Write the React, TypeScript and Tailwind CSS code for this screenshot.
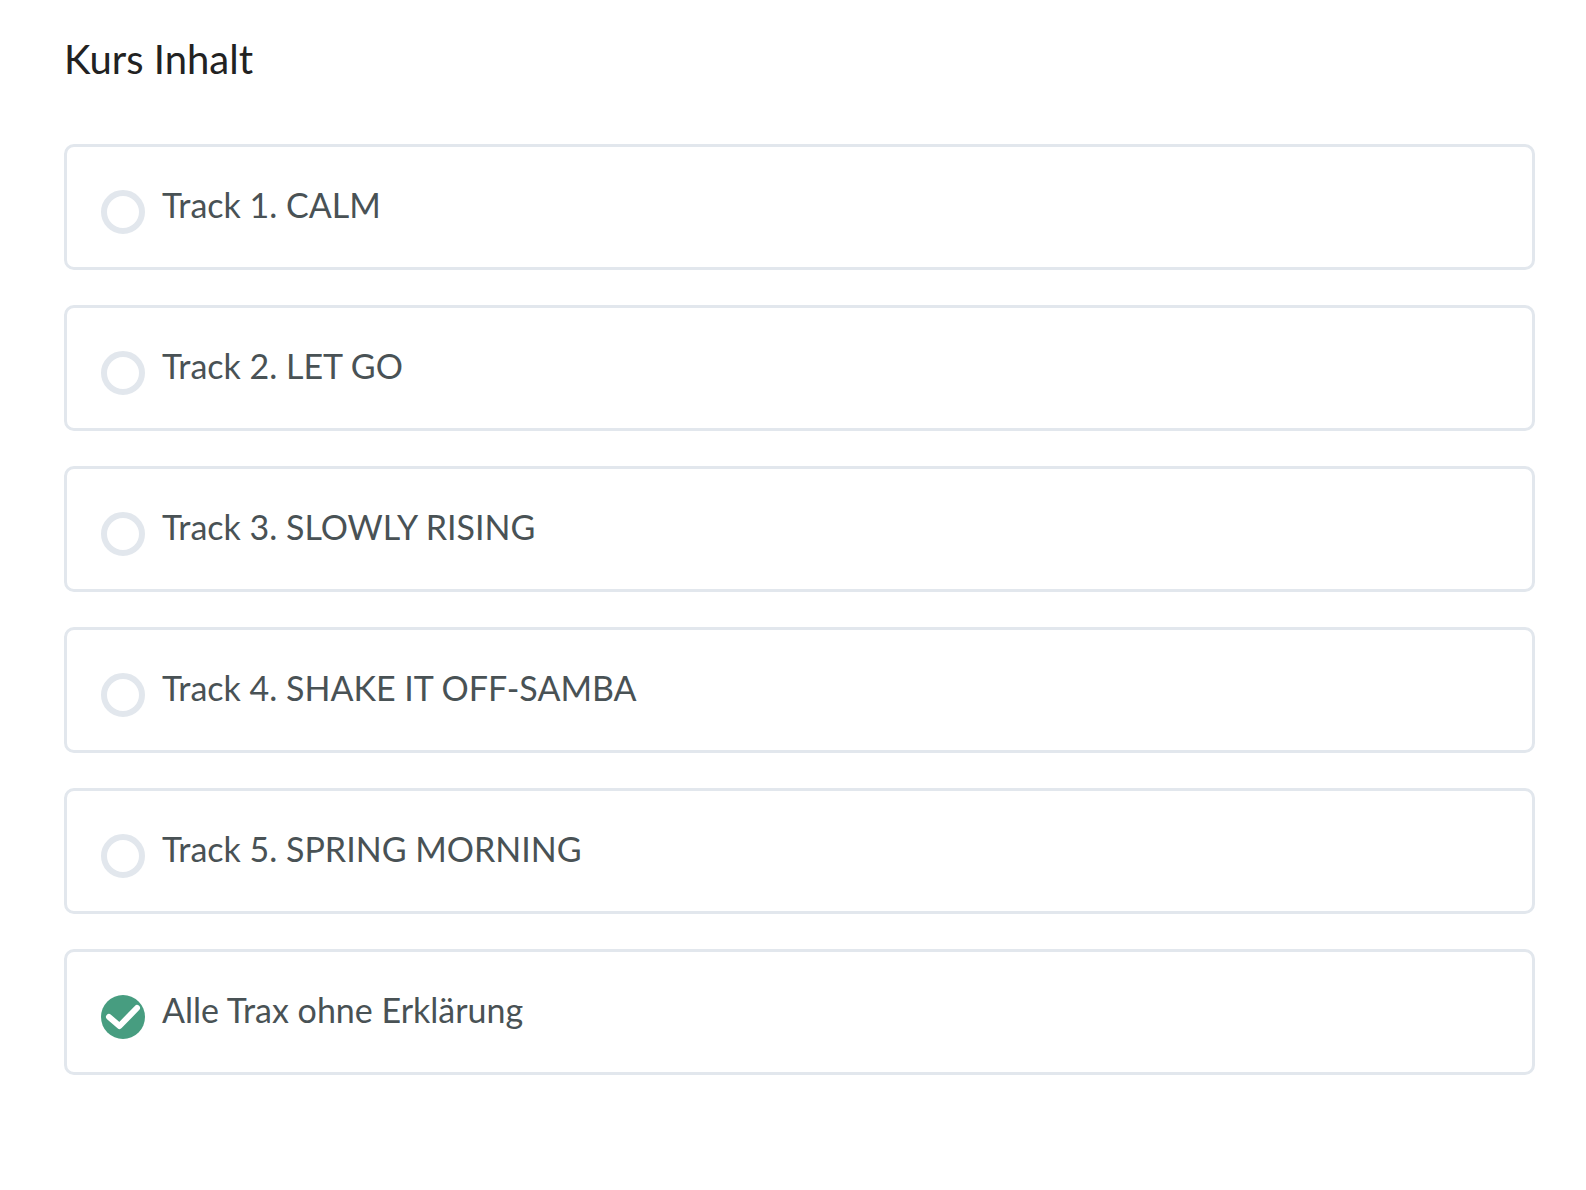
interface Lesson {
  title: string;
  href: string;
  completed: boolean;
}

const lessons: Lesson[] = [
  { title: "Track 1. CALM", href: "#track-1", completed: false },
  { title: "Track 2. LET GO", href: "#track-2", completed: false },
  { title: "Track 3. SLOWLY RISING", href: "#track-3", completed: false },
  { title: "Track 4. SHAKE IT OFF-SAMBA", href: "#track-4", completed: false },
  { title: "Track 5. SPRING MORNING", href: "#track-5", completed: false },
  { title: "Alle Trax ohne Erklärung", href: "#alle-trax", completed: true },
];

function StatusIcon({ completed }: { completed: boolean }) {
  if (!completed) {
    return <span className="size-11 shrink-0 rounded-full border-6 border-[#e2e7ed]" />;
  }

  return (
    <svg viewBox="0 0 44 44" className="size-11 shrink-0" aria-hidden="true">
      <circle cx="22" cy="22" r="22" fill="#479d80" />
      <path
        d="M8 22 18.5 31 36 13"
        fill="none"
        stroke="#fff"
        strokeWidth="6"
        strokeLinecap="round"
        strokeLinejoin="round"
      />
    </svg>
  );
}

function LessonRow({ lesson }: { lesson: Lesson }) {
  return (
    <li>
      <a
        href={lesson.href}
        className="flex min-h-[126px] gap-[17px] rounded-[10px] border-3 border-[#e2e7ed] px-[34px] pt-[34px] pb-[33px] text-[#495255]"
      >
        <span className="flex items-end">
          <StatusIcon completed={lesson.completed} />
        </span>
        <span className="text-[34px] leading-[48px] font-normal">{lesson.title}</span>
      </a>
    </li>
  );
}

export default function App() {
  return (
    <main className="min-h-screen bg-white pt-[31px] pr-[51px] pb-16 pl-16 font-['Lato','Open_Sans',sans-serif]">
      <h2 className="mb-[57px] text-[40px] leading-[56px] font-normal text-[#222]">Kurs Inhalt</h2>
      <ul className="flex flex-col gap-[35px]">
        {lessons.map((lesson) => (
          <LessonRow key={lesson.href} lesson={lesson} />
        ))}
      </ul>
    </main>
  );
}
